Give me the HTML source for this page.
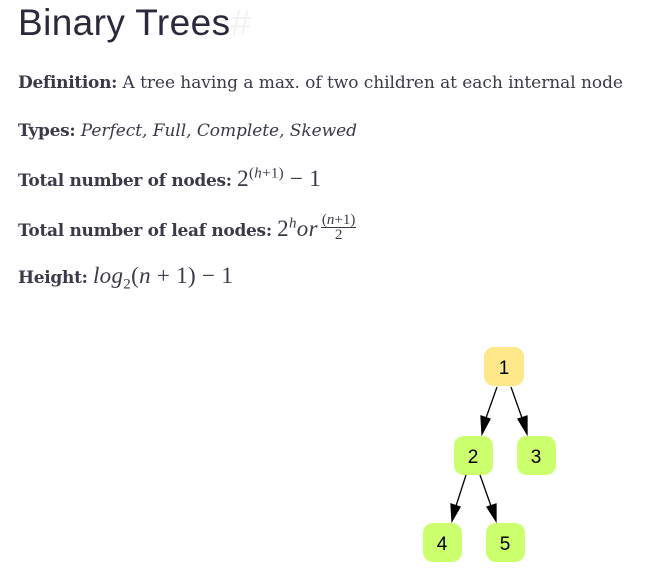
<!DOCTYPE html>
<html><head><meta charset="utf-8"><style>
body{margin:0;background:#fff;width:656px;height:571px;overflow:hidden;position:relative;color:#3a3a48}
h1{position:absolute;left:18px;top:1px;margin:0;font:400 37px/44px "Liberation Sans",sans-serif;color:#2a2a3c;letter-spacing:0.4px}
h1 span{color:#f2f2f4}
.p{position:absolute;left:18px;font:17px/22px "DejaVu Serif",serif;white-space:nowrap;letter-spacing:-0.05px}
.p b{font-weight:700;letter-spacing:-0.3px}
.m{font-family:"Liberation Serif",serif;font-size:23px;letter-spacing:0.3px}
sup,sub{font-size:15px;line-height:0}
.fr{display:inline-block;vertical-align:middle;text-align:center;font-family:"Liberation Serif",serif;font-size:15px;line-height:14px;position:relative;top:-4px;letter-spacing:0;margin-left:3px}
.fr span{display:block;border-bottom:1px solid #3a3a48;padding:0 1px}
</style></head><body>
<h1>Binary Trees<span>#</span></h1>
<div class="p" style="top:72px"><b>Definition:</b> A tree having a max. of two children at each internal node</div>
<div class="p" style="top:120px"><b>Types:</b> <i>Perfect, Full, Complete, Skewed</i></div>
<div class="p" style="top:168px"><b>Total number of nodes:</b> <span class="m">2<sup>(<i>h</i>+1)</sup> − 1</span></div>
<div class="p" style="top:217px"><b>Total number of leaf nodes:</b> <span class="m">2<sup><i>h</i></sup><i>or</i></span><span class="fr"><span>(<i>n</i>+1)</span>2</span></div>
<div class="p" style="top:265px"><b>Height:</b> <span class="m"><i>log</i><sub>2</sub>(<i>n</i> + 1) − 1</span></div>
<svg style="position:absolute;left:0;top:0" width="656" height="571">
<g font-family="Liberation Sans,sans-serif" font-size="19" text-anchor="middle">
<rect x="484" y="347" width="40" height="39" rx="10" fill="#ffe88a"/>
<rect x="454" y="436" width="39" height="39" rx="10" fill="#ccff6e"/>
<rect x="517" y="436" width="39" height="39" rx="10" fill="#ccff6e"/>
<rect x="423" y="523" width="39" height="39" rx="10" fill="#ccff6e"/>
<rect x="486" y="523" width="39" height="39" rx="10" fill="#ccff6e"/>
<text x="504" y="374">1</text><text x="473" y="463">2</text><text x="536" y="463">3</text><text x="442" y="550">4</text><text x="505" y="550">5</text>
</g>
<g stroke="#000" stroke-width="1.3">
<line x1="497" y1="387" x2="486" y2="418"/><polygon points="481,416 490,419 482,434" fill="#000"/>
<line x1="511" y1="387" x2="522" y2="418"/><polygon points="518,419 527,416 527,434" fill="#000"/>
<line x1="466" y1="475" x2="456" y2="506"/><polygon points="451,504 460,507 452,521" fill="#000"/>
<line x1="480" y1="475" x2="491" y2="506"/><polygon points="487,507 496,504 496,521" fill="#000"/>
</g>
</svg>
</body></html>
